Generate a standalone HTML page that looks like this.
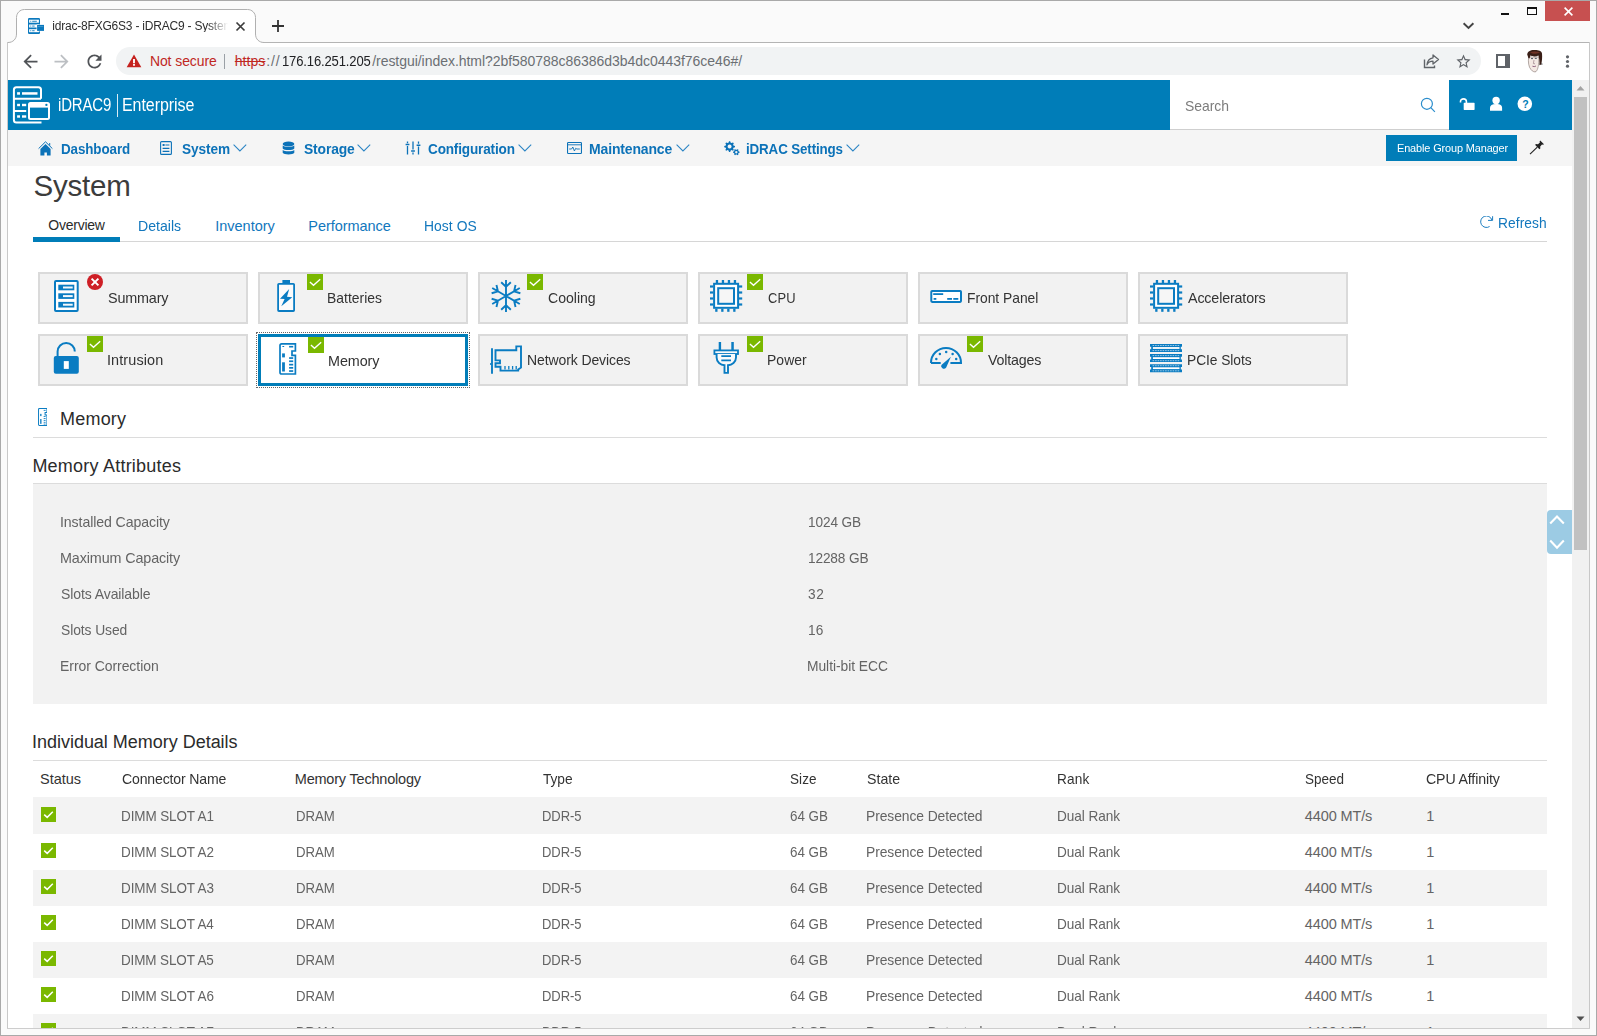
<!DOCTYPE html>
<html lang="en">
<head>
<meta charset="utf-8">
<title>idrac-8FXG6S3 - iDRAC9 - System</title>
<style>
html,body{margin:0;padding:0;}
body{width:1597px;height:1036px;overflow:hidden;background:#fafafa;font-family:"Liberation Sans",sans-serif;}
#w{position:relative;width:1597px;height:1036px;overflow:hidden;}
#w div,#w svg,#w span.t{position:absolute;box-sizing:border-box;}
.t{white-space:pre;line-height:1;}
</style>
</head>
<body>
<div id="w">
<div style="left:0px;top:0px;width:1597px;height:1px;background:#a9a9a9;"></div>
<div style="left:0px;top:0px;width:1px;height:1036px;background:#a9a9a9;"></div>
<div style="left:1596px;top:0px;width:1px;height:1036px;background:#a9a9a9;"></div>
<div style="left:0px;top:1035px;width:1597px;height:1px;background:#a9a9a9;"></div>
<div style="left:8px;top:43px;width:1581px;height:985px;background:#ffffff;"></div>
<div style="left:7px;top:42px;width:1px;height:987px;background:#c8c8c8;"></div>
<div style="left:1589px;top:42px;width:1px;height:987px;background:#c8c8c8;"></div>
<div style="left:7px;top:1028px;width:1583px;height:1px;background:#cdcdcd;"></div>
<div style="left:8px;top:42px;width:1581px;height:1px;background:#b4b4b4;"></div>
<svg style="left:0px;top:0px;" width="300" height="44" viewBox="0 0 300 44"><path d="M8 42.5 C13 42.5 16.5 39 16.5 34 L16.5 17.5 C16.5 13 20 9.5 24.5 9.5 L247.5 9.5 C252 9.5 255.5 13 255.5 17.5 L255.5 34 C255.5 39 259 42.5 264 42.5 L264 44 L8 44 Z" fill="#fff" stroke="none"/><path d="M8 42.5 C13 42.5 16.5 39 16.5 34 L16.5 17.5 C16.5 13 20 9.5 24.5 9.5 L247.5 9.5 C252 9.5 255.5 13 255.5 17.5 L255.5 34 C255.5 39 259 42.5 264 42.5" fill="none" stroke="#b0b0b0" stroke-width="1"/></svg>
<svg style="left:28px;top:18px;" width="17" height="16" viewBox="0 0 17 16"><rect x="0" y="0" width="12" height="16" rx="1.2" fill="#0a78bd"/><rect x="1.1" y="1.7" width="9.8" height="3" fill="#fff"/><rect x="1.1" y="6.5" width="9.8" height="3" fill="#fff"/><rect x="1.1" y="11.2" width="9.8" height="3" fill="#fff"/><rect x="2.1" y="2.8" width="1.2" height="0.9" fill="#3d94cc"/><rect x="4.2" y="2.8" width="4.6" height="0.9" fill="#0a78bd"/><rect x="2.1" y="7.6" width="1.2" height="0.9" fill="#3d94cc"/><rect x="4.2" y="7.6" width="2.4" height="0.9" fill="#0a78bd"/><rect x="2.1" y="12.3" width="1.2" height="0.9" fill="#3d94cc"/><rect x="4.2" y="12.3" width="2.4" height="0.9" fill="#0a78bd"/><rect x="8.6" y="6.4" width="8" height="7" fill="#fff"/><rect x="9.1" y="6.9" width="6.9" height="6" fill="#0a78bd"/><rect x="9.8" y="8.4" width="5.5" height="0.6" fill="#5fa8d6"/></svg>
<span class="t" style="left:52.3px;top:20px;font-size:12px;color:#2e2e2e;letter-spacing:-0.21px;-webkit-mask-image:linear-gradient(90deg,#000 156px,transparent 176px);mask-image:linear-gradient(90deg,#000 156px,transparent 176px);">idrac-8FXG6S3 - iDRAC9 - System</span>
<svg style="left:235px;top:21px;" width="11" height="11" viewBox="0 0 11 11"><path d="M1.5 1.5 L9.5 9.5 M9.5 1.5 L1.5 9.5" stroke="#3c3c3c" stroke-width="1.7" fill="none"/></svg>
<svg style="left:271px;top:19px;" width="14" height="14" viewBox="0 0 14 14"><path d="M7 1 V13 M1 7 H13" stroke="#333" stroke-width="1.8" fill="none"/></svg>
<svg style="left:1462px;top:21px;" width="13" height="10" viewBox="0 0 13 10"><path d="M1.6 2.2 L6.5 7 L11.4 2.2" stroke="#444" stroke-width="1.9" fill="none"/></svg>
<div style="left:1501px;top:13px;width:8px;height:2px;background:#111;"></div>
<div style="left:1527px;top:7px;width:10px;height:8px;border:1px solid #111;border-top-width:2px;"></div>
<div style="left:1545px;top:1px;width:45px;height:20px;background:#c75050;"></div>
<svg style="left:1563px;top:6px;" width="11" height="11" viewBox="0 0 11 11"><path d="M1.6 1.6 L9.4 9.4 M9.4 1.6 L1.6 9.4" stroke="#fff" stroke-width="1.6" fill="none"/></svg>
<svg style="left:19.5px;top:50.5px;" width="21" height="21" viewBox="0 0 24 24"><path d="M20 11H7.83l5.59-5.59L12 4l-8 8 8 8 1.41-1.41L7.83 13H20v-2z" fill="#505357"/></svg>
<svg style="left:51.2px;top:50.5px;" width="21" height="21" viewBox="0 0 24 24"><path d="M12 4l-1.41 1.41L16.17 11H4v2h12.17l-5.58 5.59L12 20l8-8z" fill="#bcbfc3"/></svg>
<svg style="left:83.6px;top:50.5px;" width="21" height="21" viewBox="0 0 24 24"><path d="M17.65 6.35C16.2 4.9 14.21 4 12 4c-4.42 0-7.99 3.58-7.99 8s3.57 8 7.99 8c3.73 0 6.84-2.55 7.73-6h-2.08c-.82 2.33-3.04 4-5.65 4-3.31 0-6-2.69-6-6s2.69-6 6-6c1.66 0 3.14.69 4.22 1.78L13 11h7V4l-2.35 2.35z" fill="#505357"/></svg>
<div style="left:116px;top:47px;width:1365px;height:28px;background:#f1f3f4;border-radius:14px;"></div>
<svg style="left:126px;top:53px;" width="16" height="15" viewBox="0 0 24 22"><path d="M1 21h22L12 2 1 21z" fill="#c5221f"/><path d="M10.6 8.6h2.8v6.4h-2.8zM10.6 16.4h2.8v2.4h-2.8z" fill="#fff"/></svg>
<span class="t" style="left:149.92px;top:54px;font-size:14px;color:#c0281f;letter-spacing:-0.09px;">Not secure</span>
<div style="left:224px;top:54px;width:1px;height:15px;background:#9aa0a6;"></div>
<span class="t" style="left:234.76px;top:54px;font-size:14px;color:#c0281f;letter-spacing:0.06px;text-decoration:line-through;">https</span>
<span class="t" style="left:266.37px;top:54px;font-size:14px;color:#6b6f73;letter-spacing:0.79px;">://</span>
<span class="t" style="left:281.74px;top:54px;font-size:14px;color:#202124;letter-spacing:-0.16px;transform:scaleX(0.932);transform-origin:0 0;">176.16.251.205</span>
<span class="t" style="left:372.18px;top:54px;font-size:14px;color:#6b6f73;letter-spacing:-0.04px;">/restgui/index.html?2bf580788c86386d3b4dc0443f76ce46#/</span>
<svg style="left:1423px;top:54px;" width="17" height="15" viewBox="0 0 17 15"><path d="M1.5 5.5 V13.5 H11.5 V11.5" fill="none" stroke="#5f6368" stroke-width="1.4"/><path d="M10 1 L15.5 5.5 L10 10 V7.2 C7 7.2 5.2 8.3 4 10.8 C4.4 6.8 6.5 4.3 10 3.8 Z" fill="none" stroke="#5f6368" stroke-width="1.3" stroke-linejoin="round"/></svg>
<svg style="left:1454.6px;top:52.6px;" width="17" height="17" viewBox="0 0 24 24"><path d="M22 9.24l-7.19-.62L12 2 9.19 8.63 2 9.24l5.46 4.73L5.82 21 12 17.27 18.18 21l-1.63-7.03L22 9.24zM12 15.4l-3.76 2.27 1-4.28-3.32-2.88 4.38-.38L12 6.1l1.71 4.04 4.38.38-3.32 2.88 1 4.28L12 15.4z" fill="#5f6368"/></svg>
<div style="left:1496px;top:54px;width:14px;height:14px;border:2px solid #5f6368;border-right-width:5px;"></div>
<svg style="left:1526px;top:49px;" width="18" height="24" viewBox="0 0 18 24"><path d="M2.6 8 C2 13 2.6 18 5 20.6 C6.4 22.6 9 23.4 10 22.6 C12 20.6 13 16 12.8 8 Z" fill="#f4e9e4" stroke="#6b5a55" stroke-width="0.5"/><path d="M1.2 5.6 C1.6 2.4 4 1.2 8 1 C12 0.8 15.4 1.6 16 4.4 C16.4 8 16 12.6 15.2 15.4 L13.4 16.2 C13.6 12 13.2 9 12.4 6.6 C10 8 6 7.6 4.4 6.6 L3.6 9.4 L2.4 9 Z" fill="#3a1f17"/><path d="M4 3.4 C7 2.2 11 2.4 14 3.6 C12 5 7 5.4 4 3.4 Z" fill="#6e3325"/><path d="M5 9.6 h2 M8.8 9.4 h2" stroke="#4b5560" stroke-width="1"/><path d="M8 11 L7.4 14.6 L9 14.8" stroke="#9a7f86" stroke-width="0.7" fill="none"/><path d="M6.4 17.2 q1.8 1 3.6 -0.2" stroke="#8a5a78" stroke-width="0.9" fill="none"/><path d="M15.2 14 l1.6 1 l-1.2 1 Z" fill="#444"/></svg>
<svg style="left:1565px;top:54px;" width="5" height="15" viewBox="0 0 5 15"><circle cx="2.5" cy="2.8" r="1.6" fill="#5f6368"/><circle cx="2.5" cy="7.5" r="1.6" fill="#5f6368"/><circle cx="2.5" cy="12.2" r="1.6" fill="#5f6368"/></svg>
<div style="left:8px;top:80px;width:1564px;height:50px;background:#007db8;"></div>
<svg style="left:12px;top:86px;" width="40" height="39" viewBox="0 0 40 39"><path d="M29 12.8 V3.7 Q29 1.2 26.5 1.2 H4.4 Q1.9 1.2 1.9 3.7 V34 Q1.9 36.5 4.4 36.5 H29.5 M1.9 12.8 H29 M1.9 24.9 H14.2" fill="none" stroke="#fff" stroke-width="2"/><rect x="5.1" y="6.2" width="2.9" height="2.5" fill="#fff"/><rect x="10" y="6.2" width="15.5" height="2.5" fill="#fff"/><rect x="5.1" y="17.8" width="2.9" height="2.4" fill="#fff"/><rect x="10" y="17.8" width="4.2" height="2.4" fill="#fff"/><rect x="5.1" y="29.3" width="2.9" height="2.4" fill="#fff"/><rect x="10" y="29.3" width="4.2" height="2.4" fill="#fff"/><rect x="15.3" y="15.3" width="23.6" height="19.6" fill="#007db8"/><rect x="17" y="17" width="20" height="16" rx="1.5" fill="#007db8" stroke="#fff" stroke-width="2"/><rect x="17" y="17" width="20" height="4.6" fill="#fff"/><circle cx="34.4" cy="18.9" r="1.15" fill="#007db8"/></svg>
<span class="t" style="left:58.12px;top:97px;font-size:17.5px;color:#fff;letter-spacing:-0.16px;transform:scaleX(0.855);transform-origin:0 0;">iDRAC9</span>
<div style="left:117px;top:94px;width:1px;height:23px;background:#d9ecf5;"></div>
<span class="t" style="left:122.1px;top:97px;font-size:17.5px;color:#fff;letter-spacing:-0.07px;transform:scaleX(0.915);transform-origin:0 0;">Enterprise</span>
<div style="left:1170px;top:80px;width:279px;height:50px;background:#fff;"></div>
<div style="left:1170px;top:129px;width:279px;height:1px;background:#cfcfcf;"></div>
<span class="t" style="left:1184.77px;top:99px;font-size:14.2px;color:#7c7c7c;letter-spacing:-0.02px;transform:scaleX(0.982);transform-origin:0 0;">Search</span>
<svg style="left:1420px;top:97px;" width="16" height="16" viewBox="0 0 16 16"><circle cx="6.9" cy="6.8" r="5.5" fill="none" stroke="#2a8dcc" stroke-width="1.2"/><path d="M10.8 10.7 L14.9 14.8" stroke="#2a8dcc" stroke-width="1.2"/></svg>
<svg style="left:1459px;top:97px;" width="17" height="14" viewBox="0 0 17 14"><path d="M1.5 5.4 V4.4 C1.5 2.7 2.8 1.9 4.5 1.9 C6.2 1.9 7.4 2.8 7.4 4.6 V6" fill="none" stroke="#fff" stroke-width="1.6"/><rect x="4.7" y="5.8" width="10.9" height="7.1" rx="0.6" fill="#fff"/></svg>
<svg style="left:1489px;top:96px;" width="14" height="15" viewBox="0 0 14 15"><circle cx="7.1" cy="4.5" r="3.7" fill="#fff"/><path d="M1 14.8 V12 C1 9.3 3 8 7.1 8 C11.2 8 13.1 9.3 13.1 12 V14.8 Z" fill="#fff"/></svg>
<svg style="left:1517px;top:96px;" width="16" height="16" viewBox="0 0 16 16"><circle cx="7.8" cy="7.8" r="7.3" fill="#fff"/></svg>
<span class="t" style="left:1522.3px;top:99px;font-size:10.5px;color:#007db8;font-weight:700;">?</span>
<div style="left:8px;top:130px;width:1564px;height:36px;background:#f5f5f5;"></div>
<svg style="left:37.5px;top:140.5px;" width="15" height="15" viewBox="0 0 15 15"><path d="M0.6 7.6 L7.5 0.8 L14.4 7.6" fill="none" stroke="#0c72b8" stroke-width="1"/><path d="M11.2 2 H12.2 V5 L11.2 4 Z" fill="#0c72b8"/><path d="M7.5 2.9 L12.6 7.9 V14.4 H8.9 V11.5 H6.4 V14.4 H2.4 V7.9 Z" fill="#0c72b8"/></svg>
<span class="t" style="left:60.83px;top:141px;font-size:15px;color:#0c72b8;font-weight:700;letter-spacing:-0.11px;transform:scaleX(0.893);transform-origin:0 0;">Dashboard</span>
<svg style="left:160px;top:141px;" width="12" height="14" viewBox="0 0 12 14"><rect x="0.6" y="0.6" width="10.8" height="12.8" rx="1" fill="none" stroke="#0c72b8" stroke-width="1.1"/><rect x="2.6" y="3" width="2" height="2" fill="#0c72b8"/><path d="M5.4 4 H9.4 M2.6 7.4 H9.4 M2.6 10.4 H9.4" stroke="#0c72b8" stroke-width="1.2"/></svg>
<span class="t" style="left:181.5px;top:141px;font-size:15px;color:#0c72b8;font-weight:700;letter-spacing:-0.11px;transform:scaleX(0.911);transform-origin:0 0;">System</span>
<svg style="left:233.1px;top:144px;" width="14" height="8" viewBox="0 0 14 8"><path d="M0.6 0.7 L6.9 6.9 L13.2 0.7" fill="none" stroke="#2a84c4" stroke-width="1.05"/></svg>
<svg style="left:282.4px;top:140.6px;" width="13" height="15" viewBox="0 0 13 15"><ellipse cx="6.5" cy="3" rx="5.8" ry="2.6" fill="#0c72b8"/><path d="M0.7 4.6 C2 6.4 11 6.4 12.3 4.6 V7.4 C11 9.4 2 9.4 0.7 7.4 Z M0.7 9 C2 10.8 11 10.8 12.3 9 V11.8 C11 13.9 2 13.9 0.7 11.8 Z" fill="#0c72b8"/></svg>
<span class="t" style="left:304.1px;top:141px;font-size:15px;color:#0c72b8;font-weight:700;letter-spacing:-0.16px;transform:scaleX(0.924);transform-origin:0 0;">Storage</span>
<svg style="left:357.40000000000003px;top:144px;" width="14" height="8" viewBox="0 0 14 8"><path d="M0.6 0.7 L6.9 6.9 L13.2 0.7" fill="none" stroke="#2a84c4" stroke-width="1.05"/></svg>
<svg style="left:405px;top:141px;" width="16" height="14" viewBox="0 0 16 14"><path d="M2.5 0.5 V2.2 M2.5 5 V13.5 M8 0.5 V8.6 M8 11.4 V13.5 M13.5 0.5 V2.8 M13.5 5.6 V13.5" stroke="#0c72b8" stroke-width="1.3" fill="none"/><path d="M0.6 3.6 H4.4 M6.1 10 H9.9 M11.6 4.2 H15.4" stroke="#0c72b8" stroke-width="1.5"/></svg>
<span class="t" style="left:427.77px;top:141px;font-size:15px;color:#0c72b8;font-weight:700;letter-spacing:-0.17px;transform:scaleX(0.903);transform-origin:0 0;">Configuration</span>
<svg style="left:517.6px;top:144px;" width="14" height="8" viewBox="0 0 14 8"><path d="M0.6 0.7 L6.9 6.9 L13.2 0.7" fill="none" stroke="#2a84c4" stroke-width="1.05"/></svg>
<svg style="left:567px;top:142px;" width="15" height="12" viewBox="0 0 15 12"><rect x="0.55" y="0.55" width="13.9" height="10.9" rx="0.8" fill="none" stroke="#0c72b8" stroke-width="1.1"/><path d="M0.6 2.8 H14.4" stroke="#0c72b8" stroke-width="0.9"/><path d="M2.2 7 H4.6 L5.8 5 L7.4 9 L8.8 6.2 L9.8 7 H12.8" stroke="#0c72b8" stroke-width="0.9" fill="none"/></svg>
<span class="t" style="left:589.4px;top:141px;font-size:15px;color:#0c72b8;font-weight:700;letter-spacing:-0.16px;transform:scaleX(0.933);transform-origin:0 0;">Maintenance</span>
<svg style="left:675.6px;top:144px;" width="14" height="8" viewBox="0 0 14 8"><path d="M0.6 0.7 L6.9 6.9 L13.2 0.7" fill="none" stroke="#2a84c4" stroke-width="1.05"/></svg>
<svg style="left:724px;top:141px;" width="16" height="15" viewBox="0 0 16 15"><path d="M10.97 5.01 L10.97 6.19 L9.44 6.71 L9.10 7.53 L9.81 8.98 L8.98 9.81 L7.53 9.10 L6.71 9.44 L6.19 10.97 L5.01 10.97 L4.49 9.44 L3.67 9.10 L2.22 9.81 L1.39 8.98 L2.10 7.53 L1.76 6.71 L0.23 6.19 L0.23 5.01 L1.76 4.49 L2.10 3.67 L1.39 2.22 L2.22 1.39 L3.67 2.10 L4.49 1.76 L5.01 0.23 L6.19 0.23 L6.71 1.76 L7.53 2.10 L8.98 1.39 L9.81 2.22 L9.10 3.67 L9.44 4.49 Z M5.6 3.6 a2 2 0 1 0 0.01 0 Z" fill="#0c72b8" fill-rule="evenodd"/><path d="M15.56 10.72 L15.56 11.68 L14.57 12.10 L14.21 12.72 L14.35 13.79 L13.51 14.27 L12.66 13.62 L11.94 13.62 L11.09 14.27 L10.25 13.79 L10.39 12.72 L10.03 12.10 L9.04 11.68 L9.04 10.72 L10.03 10.30 L10.39 9.68 L10.25 8.61 L11.09 8.13 L11.94 8.78 L12.66 8.78 L13.51 8.13 L14.35 8.61 L14.21 9.68 L14.57 10.30 Z M12.3 10 a1.2 1.2 0 1 0 0.01 0 Z" fill="#0c72b8" fill-rule="evenodd"/></svg>
<span class="t" style="left:745.8px;top:141px;font-size:15px;color:#0c72b8;font-weight:700;letter-spacing:-0.15px;transform:scaleX(0.891);transform-origin:0 0;">iDRAC Settings</span>
<svg style="left:846.4px;top:144px;" width="14" height="8" viewBox="0 0 14 8"><path d="M0.6 0.7 L6.9 6.9 L13.2 0.7" fill="none" stroke="#2a84c4" stroke-width="1.05"/></svg>
<div style="left:1386px;top:135px;width:131px;height:26px;background:#007db8;"></div>
<span class="t" style="left:1396.63px;top:143px;font-size:11.5px;color:#fff;letter-spacing:-0.13px;transform:scaleX(0.949);transform-origin:0 0;">Enable Group Manager</span>
<svg style="left:1529px;top:139px;" width="16" height="16" viewBox="0 0 16 16"><path d="M11.2 1.4 L15 5.2 L14 5.8 L13 5.5 L11.2 7.4 L11.3 9.6 L10.4 10.2 L6.2 6 L6.8 5.1 L9 5.2 L10.9 3.4 L10.6 2.4 Z" fill="#222"/><path d="M8.3 8.1 L1 15.2" stroke="#222" stroke-width="1.1"/></svg>
<span class="t" style="left:33.42px;top:171px;font-size:29.5px;color:#3c3c3c;letter-spacing:-0.19px;">System</span>
<span class="t" style="left:48.25px;top:218px;font-size:14px;color:#2b2b2b;letter-spacing:-0.24px;">Overview</span>
<span class="t" style="left:137.89px;top:219px;font-size:14.5px;color:#1277bd;letter-spacing:0.01px;transform:scaleX(0.972);transform-origin:0 0;">Details</span>
<span class="t" style="left:215.31px;top:219px;font-size:14.5px;color:#1277bd;letter-spacing:-0.02px;">Inventory</span>
<span class="t" style="left:308.36px;top:219px;font-size:14.5px;color:#1277bd;letter-spacing:-0.06px;">Performance</span>
<span class="t" style="left:423.71px;top:219px;font-size:14.5px;color:#1277bd;letter-spacing:0.07px;transform:scaleX(0.956);transform-origin:0 0;">Host OS</span>
<div style="left:33px;top:241px;width:1514px;height:1px;background:#d6d6d6;"></div>
<div style="left:33px;top:237px;width:87px;height:5px;background:#007db8;"></div>
<svg style="left:1480px;top:216px;" width="14" height="13" viewBox="0 0 14 13"><path d="M11.9 4.0 A5.75 5.75 0 1 0 9.6 10.5" fill="none" stroke="#1277bd" stroke-width="0.95"/><path d="M12.6 0.2 V4.4 H8" fill="none" stroke="#1277bd" stroke-width="0.95"/></svg>
<span class="t" style="left:1497.91px;top:215px;font-size:15px;color:#1277bd;letter-spacing:0.09px;transform:scaleX(0.918);transform-origin:0 0;">Refresh</span>
<div style="left:38px;top:272px;width:210px;height:52px;background:#f2f2f2;border:2px solid #dadada;"></div>
<svg style="left:54px;top:280px;" width="26" height="33" viewBox="0 0 26 33"><rect x="1" y="1" width="22.7" height="29.9" rx="1" fill="#fff" stroke="#0a7cc2" stroke-width="2"/><rect x="4.3" y="4.7" width="16" height="5.6" fill="#0a7cc2"/><rect x="9" y="6.5" width="9.7" height="2" fill="#f4f8fb"/><rect x="4.3" y="13.3" width="16" height="5.6" fill="#0a7cc2"/><rect x="9" y="15.100000000000001" width="9.7" height="2" fill="#f4f8fb"/><rect x="4.3" y="21.9" width="16" height="5.6" fill="#0a7cc2"/><rect x="9" y="23.7" width="9.7" height="2" fill="#f4f8fb"/></svg>
<svg style="left:87px;top:274px;" width="16" height="16" viewBox="0 0 16 16"><circle cx="8" cy="8" r="8" fill="#ce1f26"/><path d="M4.6 4.6 L11.4 11.4 M11.4 4.6 L4.6 11.4" stroke="#fff" stroke-width="2" fill="none"/></svg>
<span class="t" style="left:108.37px;top:291px;font-size:14.8px;color:#333;letter-spacing:-0.2px;transform:scaleX(0.973);transform-origin:0 0;">Summary</span>
<div style="left:258px;top:272px;width:210px;height:52px;background:#f2f2f2;border:2px solid #dadada;"></div>
<svg style="left:277px;top:279.9px;" width="19" height="33" viewBox="0 0 19 33"><rect x="5.4" y="0" width="7.6" height="3.6" fill="#0a7cc2"/><rect x="1.1" y="3.8" width="16" height="27.2" rx="0.8" fill="#fbfbfb" stroke="#0a7cc2" stroke-width="1.8"/><path d="M12.2 9.1 L3 18.7 L7.6 19 L4.3 26.2 L15.3 17.2 L10 16.8 Z" fill="#0a7cc2"/></svg>
<svg style="left:307px;top:274px;" width="16" height="16" viewBox="0 0 16 16"><rect width="16" height="16" fill="#7ab800"/><path d="M2.9 8.1 L6.5 11.3 L13.2 5.2" fill="none" stroke="#fff" stroke-width="1.35"/></svg>
<span class="t" style="left:327.31px;top:291px;font-size:14.8px;color:#333;letter-spacing:0.03px;transform:scaleX(0.938);transform-origin:0 0;">Batteries</span>
<div style="left:478px;top:272px;width:210px;height:52px;background:#f2f2f2;border:2px solid #dadada;"></div>
<svg style="left:490px;top:280px;" width="32" height="32" viewBox="0 0 32 32"><path d="M16.00 16.00 L16.00 0.10 M16.00 6.70 L11.17 2.20 M16.00 6.70 L20.83 2.20 M16.00 16.00 L29.77 8.05 M24.05 11.35 L25.54 4.92 M24.05 11.35 L30.37 13.28 M16.00 16.00 L29.77 23.95 M24.05 20.65 L30.37 18.72 M24.05 20.65 L25.54 27.08 M16.00 16.00 L16.00 31.90 M16.00 25.30 L20.83 29.80 M16.00 25.30 L11.17 29.80 M16.00 16.00 L2.23 23.95 M7.95 20.65 L6.46 27.08 M7.95 20.65 L1.63 18.72 M16.00 16.00 L2.23 8.05 M7.95 11.35 L1.63 13.28 M7.95 11.35 L6.46 4.92 " fill="none" stroke="#0a7cc2" stroke-width="1.9"/></svg>
<svg style="left:527px;top:274px;" width="16" height="16" viewBox="0 0 16 16"><rect width="16" height="16" fill="#7ab800"/><path d="M2.9 8.1 L6.5 11.3 L13.2 5.2" fill="none" stroke="#fff" stroke-width="1.35"/></svg>
<span class="t" style="left:547.59px;top:291px;font-size:14.8px;color:#333;letter-spacing:-0.02px;transform:scaleX(0.952);transform-origin:0 0;">Cooling</span>
<div style="left:698px;top:272px;width:210px;height:52px;background:#f2f2f2;border:2px solid #dadada;"></div>
<svg style="left:710px;top:280px;" width="33" height="32" viewBox="0 0 33 32"><rect x="4.1" y="3.8" width="24" height="24" fill="#fff" stroke="#0a7cc2" stroke-width="2"/><rect x="8.2" y="8.2" width="15.8" height="15.6" fill="#f6f6f6" stroke="#0a7cc2" stroke-width="2"/><rect x="5.800000000000001" y="0" width="2.3" height="3" fill="#0a7cc2"/><rect x="5.2" y="28.6" width="2.3" height="3.2" fill="#0a7cc2"/><rect x="0" y="5.4" width="3.2" height="2.2" fill="#0a7cc2"/><rect x="29" y="5.4" width="3.2" height="2.2" fill="#0a7cc2"/><rect x="11.8" y="0" width="2.3" height="3" fill="#0a7cc2"/><rect x="11.200000000000001" y="28.6" width="2.3" height="3.2" fill="#0a7cc2"/><rect x="0" y="11.4" width="3.2" height="2.2" fill="#0a7cc2"/><rect x="29" y="11.4" width="3.2" height="2.2" fill="#0a7cc2"/><rect x="17.799999999999997" y="0" width="2.3" height="3" fill="#0a7cc2"/><rect x="17.2" y="28.6" width="2.3" height="3.2" fill="#0a7cc2"/><rect x="0" y="17.4" width="3.2" height="2.2" fill="#0a7cc2"/><rect x="29" y="17.4" width="3.2" height="2.2" fill="#0a7cc2"/><rect x="23.799999999999997" y="0" width="2.3" height="3" fill="#0a7cc2"/><rect x="23.2" y="28.6" width="2.3" height="3.2" fill="#0a7cc2"/><rect x="0" y="23.4" width="3.2" height="2.2" fill="#0a7cc2"/><rect x="29" y="23.4" width="3.2" height="2.2" fill="#0a7cc2"/></svg>
<svg style="left:747px;top:274px;" width="16" height="16" viewBox="0 0 16 16"><rect width="16" height="16" fill="#7ab800"/><path d="M2.9 8.1 L6.5 11.3 L13.2 5.2" fill="none" stroke="#fff" stroke-width="1.35"/></svg>
<span class="t" style="left:767.65px;top:291px;font-size:14.8px;color:#333;letter-spacing:0.22px;transform:scaleX(0.873);transform-origin:0 0;">CPU</span>
<div style="left:918px;top:272px;width:210px;height:52px;background:#f2f2f2;border:2px solid #dadada;"></div>
<svg style="left:930px;top:290px;" width="33" height="13" viewBox="0 0 33 13"><rect x="1.3" y="1" width="29.7" height="10.9" rx="0.8" fill="#fff" stroke="#0a7cc2" stroke-width="2"/><rect x="3.2" y="3.2" width="10" height="1.8" fill="#0a7cc2"/><rect x="3.6" y="8" width="2.7" height="1.8" fill="#0a7cc2"/><rect x="17.2" y="8" width="4.8" height="1.8" fill="#0a7cc2"/><rect x="23.3" y="8" width="5" height="1.8" fill="#0a7cc2"/></svg>
<span class="t" style="left:966.71px;top:291px;font-size:14.8px;color:#333;letter-spacing:-0.02px;transform:scaleX(0.935);transform-origin:0 0;">Front Panel</span>
<div style="left:1138px;top:272px;width:210px;height:52px;background:#f2f2f2;border:2px solid #dadada;"></div>
<svg style="left:1150px;top:280px;" width="33" height="32" viewBox="0 0 33 32"><rect x="4.1" y="3.8" width="24" height="24" fill="#fff" stroke="#0a7cc2" stroke-width="2"/><rect x="8.2" y="8.2" width="15.8" height="15.6" fill="#f6f6f6" stroke="#0a7cc2" stroke-width="2"/><rect x="5.800000000000001" y="0" width="2.3" height="3" fill="#0a7cc2"/><rect x="5.2" y="28.6" width="2.3" height="3.2" fill="#0a7cc2"/><rect x="0" y="5.4" width="3.2" height="2.2" fill="#0a7cc2"/><rect x="29" y="5.4" width="3.2" height="2.2" fill="#0a7cc2"/><rect x="11.8" y="0" width="2.3" height="3" fill="#0a7cc2"/><rect x="11.200000000000001" y="28.6" width="2.3" height="3.2" fill="#0a7cc2"/><rect x="0" y="11.4" width="3.2" height="2.2" fill="#0a7cc2"/><rect x="29" y="11.4" width="3.2" height="2.2" fill="#0a7cc2"/><rect x="17.799999999999997" y="0" width="2.3" height="3" fill="#0a7cc2"/><rect x="17.2" y="28.6" width="2.3" height="3.2" fill="#0a7cc2"/><rect x="0" y="17.4" width="3.2" height="2.2" fill="#0a7cc2"/><rect x="29" y="17.4" width="3.2" height="2.2" fill="#0a7cc2"/><rect x="23.799999999999997" y="0" width="2.3" height="3" fill="#0a7cc2"/><rect x="23.2" y="28.6" width="2.3" height="3.2" fill="#0a7cc2"/><rect x="0" y="23.4" width="3.2" height="2.2" fill="#0a7cc2"/><rect x="29" y="23.4" width="3.2" height="2.2" fill="#0a7cc2"/></svg>
<span class="t" style="left:1187.57px;top:291px;font-size:14.8px;color:#333;letter-spacing:-0.17px;transform:scaleX(0.967);transform-origin:0 0;">Accelerators</span>
<div style="left:38px;top:334px;width:210px;height:52px;background:#f2f2f2;border:2px solid #dadada;"></div>
<svg style="left:53px;top:341px;" width="27" height="34" viewBox="0 0 27 34"><path d="M4.6 16 V10.6 A8.6 8.6 0 0 1 21.8 10.6" fill="none" stroke="#0a7cc2" stroke-width="2"/><rect x="0.8" y="15.1" width="25" height="17.7" rx="2" fill="#0a7cc2"/><rect x="10.8" y="20.1" width="5" height="7.8" fill="#fff"/></svg>
<svg style="left:87px;top:336px;" width="16" height="16" viewBox="0 0 16 16"><rect width="16" height="16" fill="#7ab800"/><path d="M2.9 8.1 L6.5 11.3 L13.2 5.2" fill="none" stroke="#fff" stroke-width="1.35"/></svg>
<span class="t" style="left:107.09px;top:353px;font-size:14.8px;color:#333;letter-spacing:0.1px;transform:scaleX(0.976);transform-origin:0 0;">Intrusion</span>
<div style="left:258px;top:334px;width:210px;height:52px;background:#fff;border:3px solid #007db8;outline:1px dotted #666;outline-offset:1px;"></div>
<svg style="left:279px;top:343px;" width="18" height="32" viewBox="0 0 18 32"><path d="M2.6 0.9 H16.4 V8 H13 V12.4 H16.4 V31 H2.6 Q1 31 1 29.4 V2.5 Q1 0.9 2.6 0.9 Z" fill="#fff" stroke="#0a7cc2" stroke-width="1.7"/><path d="M3.4 3.5 H5.2" stroke="#0a7cc2" stroke-width="1"/><rect x="3.1" y="10.4" width="2.8" height="4" fill="#0a7cc2"/><rect x="3.1" y="19.3" width="2.8" height="9.2" fill="#0a7cc2"/><rect x="10.1" y="2.9" width="4.1" height="1.6" fill="#0a7cc2"/><rect x="10.1" y="14.2" width="4.1" height="1.7" fill="#0a7cc2"/><rect x="10.1" y="17.4" width="4.1" height="1.7" fill="#0a7cc2"/><rect x="10.1" y="20.8" width="4.1" height="1.7" fill="#0a7cc2"/><rect x="10.1" y="24" width="4.1" height="1.7" fill="#0a7cc2"/><rect x="10.1" y="27.2" width="4.1" height="1.7" fill="#0a7cc2"/></svg>
<svg style="left:308px;top:337px;" width="16" height="16" viewBox="0 0 16 16"><rect width="16" height="16" fill="#7ab800"/><path d="M2.9 8.1 L6.5 11.3 L13.2 5.2" fill="none" stroke="#fff" stroke-width="1.35"/></svg>
<span class="t" style="left:328.27px;top:354px;font-size:14.8px;color:#333;letter-spacing:-0.08px;transform:scaleX(0.970);transform-origin:0 0;">Memory</span>
<div style="left:478px;top:334px;width:210px;height:52px;background:#f2f2f2;border:2px solid #dadada;"></div>
<svg style="left:490px;top:345px;" width="33" height="30" viewBox="0 0 33 30"><path d="M2 3.2 V28.8" stroke="#0a7cc2" stroke-width="1.9"/><path d="M0.2 18 H1.2 V20 H0.2Z" fill="#0a7cc2"/><path d="M5.5 5.3 H26.3 V1.4 H31 V22.6 L28.2 24.4 V25.6 H10.5 V21.8 H5.5 V18.2 H10 V15.4 H5.5 Z" fill="none" stroke="#0a7cc2" stroke-width="1.9"/><path d="M15 21 V24.6 M18.8 21 V24.6 M22.6 21 V24.6 M26.2 21 V24.6" stroke="#0a7cc2" stroke-width="1.3"/></svg>
<span class="t" style="left:526.69px;top:353px;font-size:14.8px;color:#333;letter-spacing:-0.1px;transform:scaleX(0.945);transform-origin:0 0;">Network Devices</span>
<div style="left:698px;top:334px;width:210px;height:52px;background:#f2f2f2;border:2px solid #dadada;"></div>
<svg style="left:713px;top:341px;" width="27" height="34" viewBox="0 0 27 34"><rect x="5.7" y="1" width="2.4" height="8" fill="#0a7cc2"/><rect x="18.3" y="1" width="2.5" height="8" fill="#0a7cc2"/><rect x="1.4" y="9.4" width="23.6" height="3.6" fill="#fafafa" stroke="#0a7cc2" stroke-width="1.8"/><path d="M3.6 13 V16.5 C3.6 21 7.5 24 11.5 24.2 V31.9 H15 V24.2 C19 24 23 21 23 16.5 V13" fill="#fafafa" stroke="#0a7cc2" stroke-width="1.9"/><path d="M8.3 15.2 H18 M8.3 19.3 H18" stroke="#0a7cc2" stroke-width="1.8"/></svg>
<svg style="left:747px;top:336px;" width="16" height="16" viewBox="0 0 16 16"><rect width="16" height="16" fill="#7ab800"/><path d="M2.9 8.1 L6.5 11.3 L13.2 5.2" fill="none" stroke="#fff" stroke-width="1.35"/></svg>
<span class="t" style="left:767.29px;top:353px;font-size:14.8px;color:#333;letter-spacing:0.08px;transform:scaleX(0.940);transform-origin:0 0;">Power</span>
<div style="left:918px;top:334px;width:210px;height:52px;background:#f2f2f2;border:2px solid #dadada;"></div>
<svg style="left:930px;top:346px;" width="32" height="25" viewBox="0 0 32 25"><path d="M1 16.9 A15 15 0 0 1 31 16.9 H20.4 M10.7 16.9 H1" fill="none" stroke="#0a7cc2" stroke-width="2"/><circle cx="6.3" cy="12.9" r="1.25" fill="#0a7cc2"/><circle cx="9.9" cy="8" r="1.25" fill="#0a7cc2"/><circle cx="16.2" cy="5.9" r="1.25" fill="#0a7cc2"/><circle cx="22.6" cy="8" r="1.25" fill="#0a7cc2"/><circle cx="26.2" cy="12.9" r="1.25" fill="#0a7cc2"/><path d="M20.9 10.8 L16.2 21.6 Q14.4 23.6 12.4 22.2 Q10.4 20.8 11.4 19 Z" fill="#0a7cc2"/></svg>
<svg style="left:967px;top:336px;" width="16" height="16" viewBox="0 0 16 16"><rect width="16" height="16" fill="#7ab800"/><path d="M2.9 8.1 L6.5 11.3 L13.2 5.2" fill="none" stroke="#fff" stroke-width="1.35"/></svg>
<span class="t" style="left:988.15px;top:353px;font-size:14.8px;color:#333;letter-spacing:-0.2px;transform:scaleX(0.962);transform-origin:0 0;">Voltages</span>
<div style="left:1138px;top:334px;width:210px;height:52px;background:#f2f2f2;border:2px solid #dadada;"></div>
<svg style="left:1150px;top:343.9px;" width="32" height="29" viewBox="0 0 32 29"><path d="M0 0 H32 V2.7 H30.8 V5.3 H32 V8 H0 V5.3 H1.2 V2.7 H0 Z" fill="#0a7cc2"/><rect x="2.9" y="3.1" width="26.6" height="1.8" fill="#fff"/><path d="M2.6 1.5 H30 M2.6 6.6 H30" stroke="#bcd9ee" stroke-width="0.8" stroke-dasharray="1.6 0.9"/><path d="M0 10.1 H32 V12.8 H30.8 V15.399999999999999 H32 V18.1 H0 V15.399999999999999 H1.2 V12.8 H0 Z" fill="#0a7cc2"/><rect x="2.9" y="13.2" width="26.6" height="1.8" fill="#fff"/><path d="M2.6 11.6 H30 M2.6 16.7 H30" stroke="#bcd9ee" stroke-width="0.8" stroke-dasharray="1.6 0.9"/><path d="M0 20.2 H32 V22.9 H30.8 V25.5 H32 V28.2 H0 V25.5 H1.2 V22.9 H0 Z" fill="#0a7cc2"/><rect x="2.9" y="23.3" width="26.6" height="1.8" fill="#fff"/><path d="M2.6 21.7 H30 M2.6 26.799999999999997 H30" stroke="#bcd9ee" stroke-width="0.8" stroke-dasharray="1.6 0.9"/></svg>
<span class="t" style="left:1186.71px;top:353px;font-size:14.8px;color:#333;letter-spacing:-0.08px;transform:scaleX(0.933);transform-origin:0 0;">PCIe Slots</span>
<svg style="left:37.5px;top:408px;" width="9.8" height="18" viewBox="0 0 18 32" preserveAspectRatio="none"><path d="M2.6 0.9 H16.4 V8 H13 V12.4 H16.4 V31 H2.6 Q1 31 1 29.4 V2.5 Q1 0.9 2.6 0.9 Z" fill="#fff" stroke="#0a7cc2" stroke-width="1.8"/><rect x="4" y="10.4" width="2.4" height="4" fill="#0a7cc2"/><rect x="4" y="19.6" width="2.4" height="8.6" fill="#0a7cc2"/><rect x="10.4" y="3.4" width="3.6" height="1.5" fill="#0a7cc2"/><rect x="10.4" y="14.4" width="3.6" height="1.5" fill="#0a7cc2"/><rect x="10.4" y="17.8" width="3.6" height="1.5" fill="#0a7cc2"/><rect x="10.4" y="21.2" width="3.6" height="1.5" fill="#0a7cc2"/><rect x="10.4" y="24.6" width="3.6" height="1.5" fill="#0a7cc2"/><rect x="10.4" y="27.8" width="3.6" height="1.5" fill="#0a7cc2"/></svg>
<span class="t" style="left:60.02px;top:410px;font-size:18px;color:#2b2b2b;letter-spacing:0.21px;">Memory</span>
<div style="left:33px;top:437px;width:1514px;height:1px;background:#dcdcdc;"></div>
<span class="t" style="left:32.42px;top:457px;font-size:18px;color:#2b2b2b;letter-spacing:0.22px;">Memory Attributes</span>
<div style="left:33px;top:483px;width:1514px;height:1px;background:#dcdcdc;"></div>
<div style="left:33px;top:484px;width:1514px;height:220px;background:#f2f2f2;"></div>
<span class="t" style="left:60.09px;top:515px;font-size:14.5px;color:#646464;letter-spacing:-0.1px;transform:scaleX(0.975);transform-origin:0 0;">Installed Capacity</span>
<span class="t" style="left:808.3px;top:515px;font-size:14.5px;color:#646464;letter-spacing:-0.1px;transform:scaleX(0.939);transform-origin:0 0;">1024 GB</span>
<span class="t" style="left:60.27px;top:551px;font-size:14.5px;color:#646464;letter-spacing:-0.12px;transform:scaleX(0.989);transform-origin:0 0;">Maximum Capacity</span>
<span class="t" style="left:808.3px;top:551px;font-size:14.5px;color:#646464;letter-spacing:-0.14px;transform:scaleX(0.941);transform-origin:0 0;">12288 GB</span>
<span class="t" style="left:61.37px;top:587px;font-size:14.5px;color:#646464;letter-spacing:-0.1px;transform:scaleX(0.967);transform-origin:0 0;">Slots Available</span>
<span class="t" style="left:807.65px;top:587px;font-size:14.5px;color:#646464;letter-spacing:0.64px;transform:scaleX(0.942);transform-origin:0 0;">32</span>
<span class="t" style="left:61.37px;top:623px;font-size:14.5px;color:#646464;letter-spacing:-0.09px;transform:scaleX(0.956);transform-origin:0 0;">Slots Used</span>
<span class="t" style="left:808.3px;top:623px;font-size:14.5px;color:#646464;letter-spacing:0.24px;transform:scaleX(0.942);transform-origin:0 0;">16</span>
<span class="t" style="left:60.31px;top:659px;font-size:14.5px;color:#646464;letter-spacing:-0.05px;transform:scaleX(0.964);transform-origin:0 0;">Error Correction</span>
<span class="t" style="left:807.31px;top:659px;font-size:14.5px;color:#646464;letter-spacing:-0.03px;transform:scaleX(0.952);transform-origin:0 0;">Multi-bit ECC</span>
<div style="left:1547px;top:510px;width:25px;height:44px;background:#9ccbe4;border-radius:4px 0 0 4px;"></div>
<svg style="left:1548px;top:514px;" width="18" height="12" viewBox="0 0 18 12"><path d="M2.2 9.6 L9 2.6 L15.8 9.6" fill="none" stroke="#fff" stroke-width="2.1"/></svg>
<svg style="left:1548px;top:538px;" width="18" height="12" viewBox="0 0 18 12"><path d="M2.2 2.6 L9 9.7 L15.8 2.6" fill="none" stroke="#fff" stroke-width="2.1"/></svg>
<span class="t" style="left:31.99px;top:733px;font-size:18px;color:#2b2b2b;letter-spacing:-0.02px;">Individual Memory Details</span>
<div style="left:33px;top:760px;width:1514px;height:1px;background:#dcdcdc;"></div>
<span class="t" style="left:40.1px;top:772px;font-size:14.5px;color:#333;letter-spacing:-0.02px;">Status</span>
<span class="t" style="left:122.19px;top:772px;font-size:14.5px;color:#333;letter-spacing:-0.15px;transform:scaleX(0.970);transform-origin:0 0;">Connector Name</span>
<span class="t" style="left:294.75px;top:772px;font-size:14.5px;color:#333;letter-spacing:-0.2px;">Memory Technology</span>
<span class="t" style="left:543.32px;top:772px;font-size:14.5px;color:#333;letter-spacing:-0.08px;transform:scaleX(0.947);transform-origin:0 0;">Type</span>
<span class="t" style="left:790.18px;top:772px;font-size:14.5px;color:#333;letter-spacing:0.07px;transform:scaleX(0.932);transform-origin:0 0;">Size</span>
<span class="t" style="left:866.97px;top:772px;font-size:14.5px;color:#333;letter-spacing:0.01px;transform:scaleX(0.979);transform-origin:0 0;">State</span>
<span class="t" style="left:1056.72px;top:772px;font-size:14.5px;color:#333;letter-spacing:0.15px;transform:scaleX(0.941);transform-origin:0 0;">Rank</span>
<span class="t" style="left:1304.58px;top:772px;font-size:14.5px;color:#333;transform:scaleX(0.931);transform-origin:0 0;">Speed</span>
<span class="t" style="left:1425.59px;top:772px;font-size:14.5px;color:#333;letter-spacing:-0.15px;transform:scaleX(0.978);transform-origin:0 0;">CPU Affinity</span>
<div style="left:33px;top:797px;width:1514px;height:231px;overflow:hidden;">
<div style="left:0px;top:0px;width:1514px;height:37px;background:#f3f3f3;"></div>
<svg style="left:8px;top:10px;" width="15" height="15" viewBox="0 0 15 15"><rect width="15" height="15" fill="#7ab800"/><path d="M3.2 7.6 L6.2 10.4 L11.8 4.8" fill="none" stroke="#fff" stroke-width="1.5"/></svg>
<svg style="left:8px;top:46px;" width="15" height="15" viewBox="0 0 15 15"><rect width="15" height="15" fill="#7ab800"/><path d="M3.2 7.6 L6.2 10.4 L11.8 4.8" fill="none" stroke="#fff" stroke-width="1.5"/></svg>
<div style="left:0px;top:73px;width:1514px;height:36px;background:#f3f3f3;"></div>
<svg style="left:8px;top:82px;" width="15" height="15" viewBox="0 0 15 15"><rect width="15" height="15" fill="#7ab800"/><path d="M3.2 7.6 L6.2 10.4 L11.8 4.8" fill="none" stroke="#fff" stroke-width="1.5"/></svg>
<svg style="left:8px;top:118px;" width="15" height="15" viewBox="0 0 15 15"><rect width="15" height="15" fill="#7ab800"/><path d="M3.2 7.6 L6.2 10.4 L11.8 4.8" fill="none" stroke="#fff" stroke-width="1.5"/></svg>
<div style="left:0px;top:145px;width:1514px;height:36px;background:#f3f3f3;"></div>
<svg style="left:8px;top:154px;" width="15" height="15" viewBox="0 0 15 15"><rect width="15" height="15" fill="#7ab800"/><path d="M3.2 7.6 L6.2 10.4 L11.8 4.8" fill="none" stroke="#fff" stroke-width="1.5"/></svg>
<svg style="left:8px;top:190px;" width="15" height="15" viewBox="0 0 15 15"><rect width="15" height="15" fill="#7ab800"/><path d="M3.2 7.6 L6.2 10.4 L11.8 4.8" fill="none" stroke="#fff" stroke-width="1.5"/></svg>
<div style="left:0px;top:217px;width:1514px;height:36px;background:#f3f3f3;"></div>
<svg style="left:8px;top:226px;" width="15" height="15" viewBox="0 0 15 15"><rect width="15" height="15" fill="#7ab800"/><path d="M3.2 7.6 L6.2 10.4 L11.8 4.8" fill="none" stroke="#fff" stroke-width="1.5"/></svg>
</div>
<span class="t" style="left:121.12px;top:809px;font-size:14.5px;color:#646464;letter-spacing:-0.12px;transform:scaleX(0.930);transform-origin:0 0;">DIMM SLOT A1</span>
<span class="t" style="left:295.69px;top:809px;font-size:14.5px;color:#646464;letter-spacing:-0.04px;transform:scaleX(0.910);transform-origin:0 0;">DRAM</span>
<span class="t" style="left:542.49px;top:809px;font-size:14.5px;color:#646464;letter-spacing:-0.04px;transform:scaleX(0.896);transform-origin:0 0;">DDR-5</span>
<span class="t" style="left:790.43px;top:809px;font-size:14.5px;color:#646464;letter-spacing:-0.02px;transform:scaleX(0.925);transform-origin:0 0;">64 GB</span>
<span class="t" style="left:866.11px;top:809px;font-size:14.5px;color:#646464;letter-spacing:-0.09px;transform:scaleX(0.956);transform-origin:0 0;">Presence Detected</span>
<span class="t" style="left:1056.72px;top:809px;font-size:14.5px;color:#646464;letter-spacing:-0.05px;transform:scaleX(0.938);transform-origin:0 0;">Dual Rank</span>
<span class="t" style="left:1304.83px;top:809px;font-size:14.5px;color:#646464;letter-spacing:-0.12px;">4400 MT/s</span>
<span class="t" style="left:1426.3px;top:809px;font-size:14.5px;color:#646464;">1</span>
<span class="t" style="left:121.12px;top:845px;font-size:14.5px;color:#646464;letter-spacing:-0.12px;transform:scaleX(0.930);transform-origin:0 0;">DIMM SLOT A2</span>
<span class="t" style="left:295.69px;top:845px;font-size:14.5px;color:#646464;letter-spacing:-0.04px;transform:scaleX(0.910);transform-origin:0 0;">DRAM</span>
<span class="t" style="left:542.49px;top:845px;font-size:14.5px;color:#646464;letter-spacing:-0.04px;transform:scaleX(0.896);transform-origin:0 0;">DDR-5</span>
<span class="t" style="left:790.43px;top:845px;font-size:14.5px;color:#646464;letter-spacing:-0.02px;transform:scaleX(0.925);transform-origin:0 0;">64 GB</span>
<span class="t" style="left:866.11px;top:845px;font-size:14.5px;color:#646464;letter-spacing:-0.09px;transform:scaleX(0.956);transform-origin:0 0;">Presence Detected</span>
<span class="t" style="left:1056.72px;top:845px;font-size:14.5px;color:#646464;letter-spacing:-0.05px;transform:scaleX(0.938);transform-origin:0 0;">Dual Rank</span>
<span class="t" style="left:1304.83px;top:845px;font-size:14.5px;color:#646464;letter-spacing:-0.12px;">4400 MT/s</span>
<span class="t" style="left:1426.3px;top:845px;font-size:14.5px;color:#646464;">1</span>
<span class="t" style="left:121.12px;top:881px;font-size:14.5px;color:#646464;letter-spacing:-0.12px;transform:scaleX(0.930);transform-origin:0 0;">DIMM SLOT A3</span>
<span class="t" style="left:295.69px;top:881px;font-size:14.5px;color:#646464;letter-spacing:-0.04px;transform:scaleX(0.910);transform-origin:0 0;">DRAM</span>
<span class="t" style="left:542.49px;top:881px;font-size:14.5px;color:#646464;letter-spacing:-0.04px;transform:scaleX(0.896);transform-origin:0 0;">DDR-5</span>
<span class="t" style="left:790.43px;top:881px;font-size:14.5px;color:#646464;letter-spacing:-0.02px;transform:scaleX(0.925);transform-origin:0 0;">64 GB</span>
<span class="t" style="left:866.11px;top:881px;font-size:14.5px;color:#646464;letter-spacing:-0.09px;transform:scaleX(0.956);transform-origin:0 0;">Presence Detected</span>
<span class="t" style="left:1056.72px;top:881px;font-size:14.5px;color:#646464;letter-spacing:-0.05px;transform:scaleX(0.938);transform-origin:0 0;">Dual Rank</span>
<span class="t" style="left:1304.83px;top:881px;font-size:14.5px;color:#646464;letter-spacing:-0.12px;">4400 MT/s</span>
<span class="t" style="left:1426.3px;top:881px;font-size:14.5px;color:#646464;">1</span>
<span class="t" style="left:121.12px;top:917px;font-size:14.5px;color:#646464;letter-spacing:-0.14px;transform:scaleX(0.930);transform-origin:0 0;">DIMM SLOT A4</span>
<span class="t" style="left:295.69px;top:917px;font-size:14.5px;color:#646464;letter-spacing:-0.04px;transform:scaleX(0.910);transform-origin:0 0;">DRAM</span>
<span class="t" style="left:542.49px;top:917px;font-size:14.5px;color:#646464;letter-spacing:-0.04px;transform:scaleX(0.896);transform-origin:0 0;">DDR-5</span>
<span class="t" style="left:790.43px;top:917px;font-size:14.5px;color:#646464;letter-spacing:-0.02px;transform:scaleX(0.925);transform-origin:0 0;">64 GB</span>
<span class="t" style="left:866.11px;top:917px;font-size:14.5px;color:#646464;letter-spacing:-0.09px;transform:scaleX(0.956);transform-origin:0 0;">Presence Detected</span>
<span class="t" style="left:1056.72px;top:917px;font-size:14.5px;color:#646464;letter-spacing:-0.05px;transform:scaleX(0.938);transform-origin:0 0;">Dual Rank</span>
<span class="t" style="left:1304.83px;top:917px;font-size:14.5px;color:#646464;letter-spacing:-0.12px;">4400 MT/s</span>
<span class="t" style="left:1426.3px;top:917px;font-size:14.5px;color:#646464;">1</span>
<span class="t" style="left:121.12px;top:953px;font-size:14.5px;color:#646464;letter-spacing:-0.13px;transform:scaleX(0.930);transform-origin:0 0;">DIMM SLOT A5</span>
<span class="t" style="left:295.69px;top:953px;font-size:14.5px;color:#646464;letter-spacing:-0.04px;transform:scaleX(0.910);transform-origin:0 0;">DRAM</span>
<span class="t" style="left:542.49px;top:953px;font-size:14.5px;color:#646464;letter-spacing:-0.04px;transform:scaleX(0.896);transform-origin:0 0;">DDR-5</span>
<span class="t" style="left:790.43px;top:953px;font-size:14.5px;color:#646464;letter-spacing:-0.02px;transform:scaleX(0.925);transform-origin:0 0;">64 GB</span>
<span class="t" style="left:866.11px;top:953px;font-size:14.5px;color:#646464;letter-spacing:-0.09px;transform:scaleX(0.956);transform-origin:0 0;">Presence Detected</span>
<span class="t" style="left:1056.72px;top:953px;font-size:14.5px;color:#646464;letter-spacing:-0.05px;transform:scaleX(0.938);transform-origin:0 0;">Dual Rank</span>
<span class="t" style="left:1304.83px;top:953px;font-size:14.5px;color:#646464;letter-spacing:-0.12px;">4400 MT/s</span>
<span class="t" style="left:1426.3px;top:953px;font-size:14.5px;color:#646464;">1</span>
<span class="t" style="left:121.12px;top:989px;font-size:14.5px;color:#646464;letter-spacing:-0.12px;transform:scaleX(0.930);transform-origin:0 0;">DIMM SLOT A6</span>
<span class="t" style="left:295.69px;top:989px;font-size:14.5px;color:#646464;letter-spacing:-0.04px;transform:scaleX(0.910);transform-origin:0 0;">DRAM</span>
<span class="t" style="left:542.49px;top:989px;font-size:14.5px;color:#646464;letter-spacing:-0.04px;transform:scaleX(0.896);transform-origin:0 0;">DDR-5</span>
<span class="t" style="left:790.43px;top:989px;font-size:14.5px;color:#646464;letter-spacing:-0.02px;transform:scaleX(0.925);transform-origin:0 0;">64 GB</span>
<span class="t" style="left:866.11px;top:989px;font-size:14.5px;color:#646464;letter-spacing:-0.09px;transform:scaleX(0.956);transform-origin:0 0;">Presence Detected</span>
<span class="t" style="left:1056.72px;top:989px;font-size:14.5px;color:#646464;letter-spacing:-0.05px;transform:scaleX(0.938);transform-origin:0 0;">Dual Rank</span>
<span class="t" style="left:1304.83px;top:989px;font-size:14.5px;color:#646464;letter-spacing:-0.12px;">4400 MT/s</span>
<span class="t" style="left:1426.3px;top:989px;font-size:14.5px;color:#646464;">1</span>
<span class="t" style="left:121.12px;top:1025px;font-size:14.5px;color:#646464;letter-spacing:-0.12px;transform:scaleX(0.930);transform-origin:0 0;">DIMM SLOT A7</span>
<span class="t" style="left:295.69px;top:1025px;font-size:14.5px;color:#646464;letter-spacing:-0.04px;transform:scaleX(0.910);transform-origin:0 0;">DRAM</span>
<span class="t" style="left:542.49px;top:1025px;font-size:14.5px;color:#646464;letter-spacing:-0.04px;transform:scaleX(0.896);transform-origin:0 0;">DDR-5</span>
<span class="t" style="left:790.43px;top:1025px;font-size:14.5px;color:#646464;letter-spacing:-0.02px;transform:scaleX(0.925);transform-origin:0 0;">64 GB</span>
<span class="t" style="left:866.11px;top:1025px;font-size:14.5px;color:#646464;letter-spacing:-0.09px;transform:scaleX(0.956);transform-origin:0 0;">Presence Detected</span>
<span class="t" style="left:1056.72px;top:1025px;font-size:14.5px;color:#646464;letter-spacing:-0.05px;transform:scaleX(0.938);transform-origin:0 0;">Dual Rank</span>
<span class="t" style="left:1304.83px;top:1025px;font-size:14.5px;color:#646464;letter-spacing:-0.12px;">4400 MT/s</span>
<span class="t" style="left:1426.3px;top:1025px;font-size:14.5px;color:#646464;">1</span>
<div style="left:1572px;top:80px;width:17px;height:948px;background:#f1f1f1;"></div>
<div style="left:1574px;top:97px;width:13px;height:453px;background:#c1c1c1;"></div>
<svg style="left:1576px;top:85px;" width="9" height="6" viewBox="0 0 9 6"><path d="M0.5 5.5 L4.5 1 L8.5 5.5 Z" fill="#a3a3a3"/></svg>
<svg style="left:1576px;top:1016px;" width="9" height="6" viewBox="0 0 9 6"><path d="M0.5 0.5 L4.5 5 L8.5 0.5 Z" fill="#505050"/></svg>
<div style="left:1px;top:1029px;width:1595px;height:6px;background:#fafafa;"></div>
<div style="left:7px;top:1028px;width:1583px;height:1px;background:#cdcdcd;"></div>
<div style="left:0px;top:1035px;width:1597px;height:1px;background:#a9a9a9;"></div>
</div>
</body>
</html>
